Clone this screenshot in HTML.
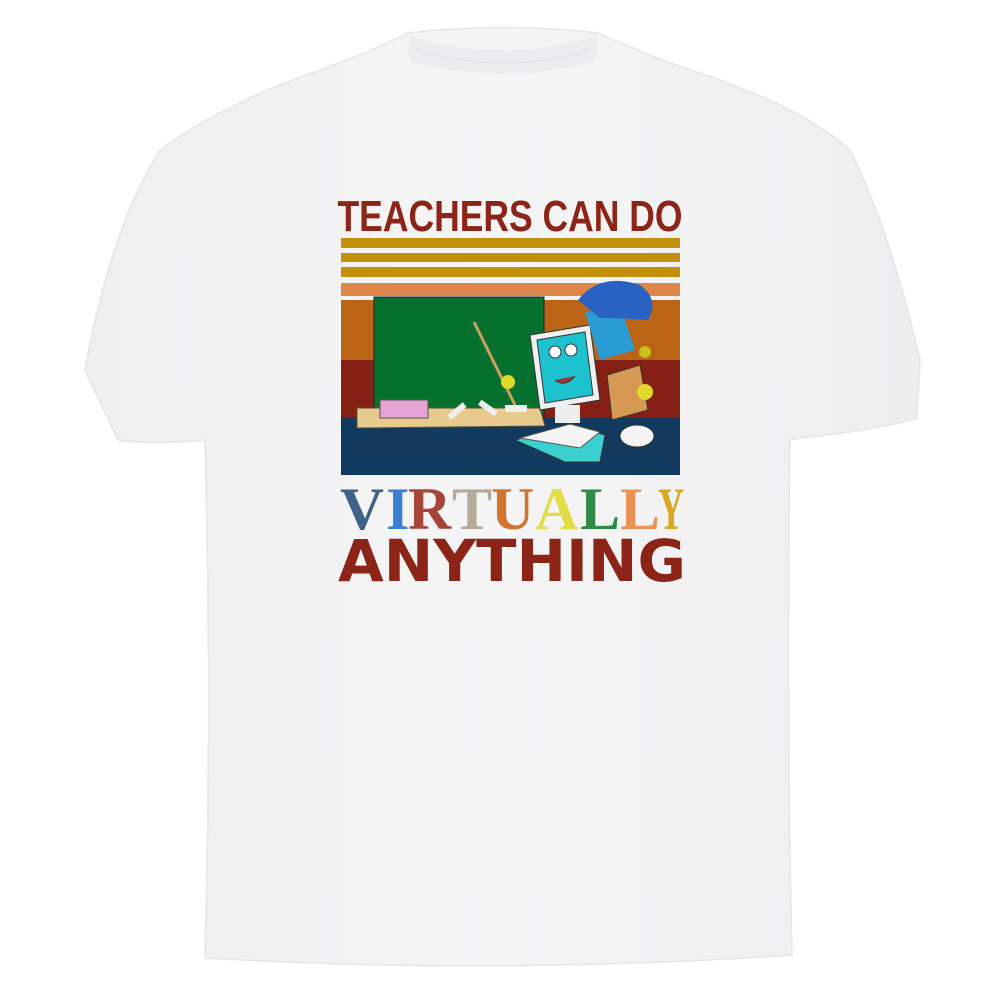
<!DOCTYPE html>
<html><head><style>
html,body{margin:0;padding:0;background:#fff;width:1000px;height:1000px;overflow:hidden}
svg{display:block}
</style></head><body>
<svg width="1000" height="1000" viewBox="0 0 1000 1000" xmlns="http://www.w3.org/2000/svg">
<defs>
<linearGradient id="sh" x1="0" y1="0" x2="1" y2="0">
<stop offset="0" stop-color="#efeff0"/><stop offset="0.5" stop-color="#f5f5f6"/><stop offset="1" stop-color="#eeeeef"/>
</linearGradient>
</defs>
<path d="M408 33 Q500 22 598 33 Q640 52 690 70 Q800 105 850 150 Q890 230 920 360 L917 418 Q880 430 800 438 L790 440 Q786 700 792 955 Q500 975 205 958 Q212 700 205 440 Q150 445 118 440 L85 370 Q110 230 160 150 Q220 105 320 70 Q370 52 408 33 Z" fill="url(#sh)" stroke="#e6e6e8" stroke-width="1.5"/>
<path d="M410 36 Q505 64 596 36 Q600 55 592 62 Q500 86 413 62 Q405 55 410 36Z" fill="#ececee"/>
<path d="M416 50 Q505 76 590 50" fill="none" stroke="#e2e2e4" stroke-width="1.5"/>
<!-- stripes -->
<rect x="341" y="238" width="339" height="10" fill="#c2900a"/>
<rect x="341" y="253" width="339" height="9" fill="#c2900a"/>
<rect x="341" y="267" width="339" height="10" fill="#c2900a"/>
<rect x="341" y="283" width="339" height="13" fill="#de8549"/>
<rect x="341" y="300" width="339" height="60" fill="#bb6416"/>
<rect x="341" y="360" width="339" height="58" fill="#861f14"/>
<rect x="341" y="418" width="339" height="57" fill="#123a5e"/>
<!-- chalkboard -->
<rect x="374" y="297" width="170" height="122" fill="#06702f" stroke="#222" stroke-width="1"/>
<path d="M357 408 L540 408 L545 426 L357 428 Z" fill="#e8c98e" stroke="#553" stroke-width="1"/>
<rect x="380" y="400" width="48" height="18" fill="#e7a3d6" stroke="#555" stroke-width="1"/>
<rect x="447" y="408" width="20" height="6" fill="#eee" transform="rotate(-40 457 411)"/>
<rect x="478" y="405" width="20" height="6" fill="#eee" transform="rotate(35 488 408)"/>
<line x1="474" y1="322" x2="515" y2="405" stroke="#c8a060" stroke-width="3"/>
<rect x="505" y="405" width="22" height="7" fill="#eee"/>
<circle cx="508" cy="382" r="7" fill="#e2d92a"/>
<!-- computer -->
<path d="M530 335 L590 325 L600 400 L540 410 Z" fill="#f0f0f0" stroke="#333"/>
<path d="M537 340 L585 332 L593 395 L545 403 Z" fill="#1cc3cf" stroke="#333"/>
<circle cx="555" cy="352" r="6" fill="#fff" stroke="#333"/><circle cx="571" cy="350" r="6" fill="#fff" stroke="#333"/>
<path d="M555 380 Q565 388 575 376" fill="#a33" stroke="#333"/>
<path d="M585 312 L620 305 L635 350 L600 360 Z" fill="#2a9bd3"/>
<path d="M578 300 Q600 272 640 285 Q660 300 648 320 Q620 318 600 318 Z" fill="#2a62c4"/>
<circle cx="645" cy="352" r="6" fill="#c9c01a"/>
<path d="M607 375 L640 365 L648 410 L612 420 Z" fill="#d69852" stroke="#333"/>
<circle cx="645" cy="392" r="8" fill="#e2d92a"/>
<rect x="555" y="405" width="25" height="18" fill="#eee"/>
<path d="M515 440 L570 425 L605 435 L600 462 L565 462 Z" fill="#3ccfd0" stroke="#333"/>
<path d="M520 438 L570 424 L600 432 L580 448 Z" fill="#f4f4f4" stroke="#555"/>
<ellipse cx="637" cy="436" rx="17" ry="11" fill="#f4f4f4" stroke="#333"/>
<!-- text -->
<text x="510" y="231" text-anchor="middle" font-family="Liberation Sans, sans-serif" font-weight="bold" font-size="44" fill="#8c2417" textLength="345" lengthAdjust="spacingAndGlyphs">TEACHERS CAN DO</text>
<g font-family="Liberation Serif, serif" font-weight="bold" font-size="60">
<text x="340" y="529" fill="#3f6287" textLength="44" lengthAdjust="spacingAndGlyphs">V</text>
<text x="386" y="529" fill="#3b7fd4">I</text>
<text x="408" y="529" fill="#a5453a">R</text>
<text x="452" y="529" fill="#b5a999">T</text>
<text x="491" y="529" fill="#d1752f">U</text>
<text x="535" y="529" fill="#e0dd48">A</text>
<text x="580" y="529" fill="#2f8a45">L</text>
<text x="620" y="529" fill="#ea9255">L</text>
<text x="658" y="529" fill="#d8a820" textLength="26" lengthAdjust="spacingAndGlyphs">Y</text>
</g>
<text x="512" y="581" text-anchor="middle" font-family="DejaVu Sans, sans-serif" font-weight="bold" font-size="58" fill="#8c2417" textLength="348" lengthAdjust="spacingAndGlyphs">ANYTHING</text>
</svg>
</body></html>
